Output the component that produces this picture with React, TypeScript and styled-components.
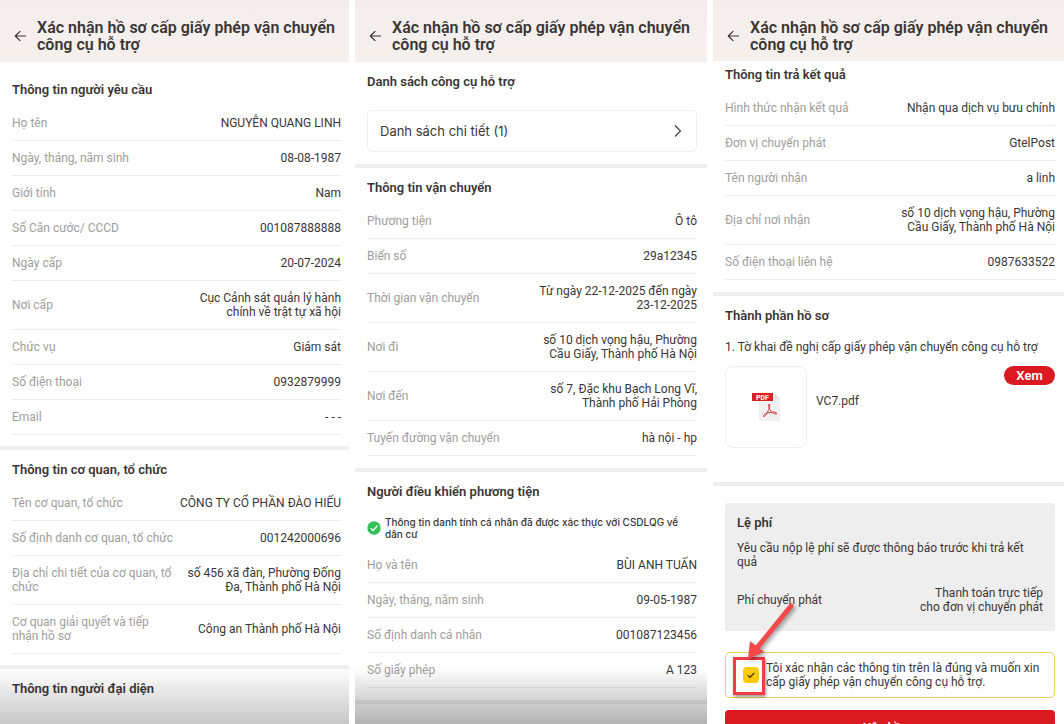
import React from "react";
import styled, { createGlobalStyle } from "styled-components";

const GlobalStyle = createGlobalStyle`
  * { box-sizing: border-box; }
  html, body { margin: 0; background: #fff; overflow: hidden; }
  body, button, input {
    font-family: Roboto, "Liberation Sans", sans-serif;
  }
`;

const ink = "#3b3635";
const muted = "#a09e9d";

const Board = styled.main`
  display: grid;
  grid-template-columns: 349fr 352fr 351fr;
  gap: 6px;
  height: 100vh;
  overflow: hidden;
`;

const Screen = styled.section`
  position: relative;
  min-width: 0;
  overflow: hidden;
  background: #fff;
  color: ${ink};
`;

const Header = styled.header<{ $height: number }>`
  display: flex;
  align-items: center;
  gap: 9px;
  height: ${(p) => p.$height}px;
  padding: 10px 8px 0 13px;
  background: linear-gradient(#f3eeec, #f6f0ed);
`;

const BackButton = styled.button`
  display: flex;
  padding: 0;
  border: 0;
  background: none;
  color: ${ink};
`;

const Title = styled.h1`
  margin: 0;
  font-size: 16px;
  font-weight: 600;
  line-height: 17px;
`;

const Section = styled.section<{ $top?: number; $right: number; $bottom?: number; $last?: boolean }>`
  padding: ${(p) => p.$top ?? 12}px ${(p) => p.$right}px ${(p) => p.$bottom ?? 12}px 12px;
  border-bottom: ${(p) => (p.$last ? 0 : 4)}px solid #eeeeee;
`;

const Heading = styled.h2`
  margin: 0 0 8px;
  font-size: 13px;
  font-weight: 600;
  line-height: 16px;
`;

const List = styled.dl`
  margin: 0;
`;

const Row = styled.div`
  display: flex;
  align-items: center;
  justify-content: space-between;
  gap: 8px;
  padding: 10px 0;
  border-bottom: 1px solid #ededed;
  font-size: 12px;
  line-height: 14px;
`;

const Term = styled.dt`
  max-width: 50%;
  color: ${muted};
`;

const Value = styled.dd`
  flex: none;
  margin: 0;
  text-align: right;
  white-space: pre-line;
`;

const DetailButton = styled.button`
  display: flex;
  align-items: center;
  justify-content: space-between;
  width: 100%;
  height: 42px;
  margin-top: 20px;
  padding: 0 12px;
  border: 1px solid #f0f0f0;
  border-radius: 5px;
  background: #fff;
  color: ${ink};
  font-family: Inter, "Liberation Sans", sans-serif;
  font-size: 13px;
`;

const Verified = styled.p`
  display: flex;
  align-items: center;
  gap: 4px;
  margin: 16px 0 8px;
  font-family: Inter, "Liberation Sans", sans-serif;
  font-size: 10px;
  font-weight: 500;
  line-height: 12px;
  white-space: pre-line;

  svg { flex: none; }
`;

const Fade = styled.div<{ $strength: number }>`
  position: absolute;
  inset: auto 0 0;
  height: 56px;
  background: linear-gradient(transparent, rgba(0, 0, 0, ${(p) => p.$strength}));
  pointer-events: none;
`;

const Text = styled.p`
  margin: 0;
  font-size: 12px;
  line-height: 14px;
  white-space: pre-line;
`;

const DocumentName = styled.h3`
  margin: 16px 0 0;
  font-size: 12px;
  font-weight: 400;
  line-height: 14px;
`;

const FileRow = styled.div`
  display: flex;
  align-items: flex-start;
  gap: 9px;
  margin-top: 12px;
`;

const FileThumb = styled.div`
  display: grid;
  place-items: center;
  width: 82px;
  height: 82px;
  border: 1px solid #efefef;
  border-radius: 8px;
`;

const FileName = styled(Text)`
  flex: 1;
  padding-top: 28px;
`;

const ViewButton = styled.button`
  width: 51px;
  height: 19px;
  padding: 0;
  border: 0;
  border-radius: 10px;
  background: #da1a20;
  color: #fff;
  font-size: 13px;
  font-weight: 600;
  line-height: 18px;
`;

const FeeCard = styled.div`
  padding: 12px 12px 17px;
  border-radius: 3px 3px 0 0;
  background: #eeeeee;
`;

const FeeNote = styled(Text)`
  margin-top: 10px;
`;

const FeeRow = styled.div`
  display: flex;
  align-items: center;
  justify-content: space-between;
  margin-top: 17px;
  text-align: right;
`;

const Confirm = styled.label`
  display: flex;
  align-items: center;
  gap: 7px;
  margin-top: 21px;
  padding: 8px 8px 8px 17px;
  border: 1px solid #e8cf5a;
  border-radius: 5px;
`;

const CheckWrap = styled.span`
  position: relative;
  display: flex;
`;

const Checkbox = styled.input`
  appearance: none;
  width: 16px;
  height: 16px;
  margin: 0;
  border-radius: 4px;
  background: #fbcb0a;
`;

const Tick = styled.svg`
  position: absolute;
  inset: 0;
  pointer-events: none;
`;

const Marker = styled.span`
  position: absolute;
  inset: -10px -6px -12px -10px;
  border: 3px solid #ee3f42;
  box-shadow: 1px 2px 3px rgba(0, 0, 0, 0.4);
  pointer-events: none;
`;

const Arrow = styled.svg`
  position: absolute;
  left: 0;
  bottom: 22px;
  overflow: visible;
  filter: drop-shadow(2px 2px 2px rgba(0, 0, 0, 0.4));
  pointer-events: none;
`;

const SubmitButton = styled.button`
  display: block;
  width: 100%;
  height: 36px;
  margin-top: 12px;
  padding: 0;
  border: 0;
  border-radius: 4px;
  background: #da1a20;
  color: #fff;
  font-size: 12px;
  font-weight: 600;
`;

type Entry = [label: string, value: string];

const requester: Entry[] = [
  ["Họ tên", "NGUYỄN QUANG LINH"],
  ["Ngày, tháng, năm sinh", "08-08-1987"],
  ["Giới tính", "Nam"],
  ["Số Căn cước/ CCCD", "001087888888"],
  ["Ngày cấp", "20-07-2024"],
  ["Nơi cấp", "Cục Cảnh sát quản lý hành\nchính về trật tự xã hội"],
  ["Chức vụ", "Giám sát"],
  ["Số điện thoại", "0932879999"],
  ["Email", "- - -"],
];

const organization: Entry[] = [
  ["Tên cơ quan, tổ chức", "CÔNG TY CỔ PHẦN ĐÀO HIẾU"],
  ["Số định danh cơ quan, tổ chức", "001242000696"],
  ["Địa chỉ chi tiết của cơ quan, tổ chức", "số 456 xã đàn, Phường Đống\nĐa, Thành phố Hà Nội"],
  ["Cơ quan giải quyết và tiếp nhận hồ sơ", "Công an Thành phố Hà Nội"],
];

const transport: Entry[] = [
  ["Phương tiện", "Ô tô"],
  ["Biển số", "29a12345"],
  ["Thời gian vận chuyển", "Từ ngày 22-12-2025 đến ngày\n23-12-2025"],
  ["Nơi đi", "số 10 dịch vọng hậu, Phường\nCầu Giấy, Thành phố Hà Nội"],
  ["Nơi đến", "số 7, Đặc khu Bạch Long Vĩ,\nThành phố Hải Phòng"],
  ["Tuyến đường vận chuyển", "hà nội - hp"],
];

const driver: Entry[] = [
  ["Họ và tên", "BÙI ANH TUẤN"],
  ["Ngày, tháng, năm sinh", "09-05-1987"],
  ["Số định danh cá nhân", "001087123456"],
  ["Số giấy phép", "A 123"],
];

const delivery: Entry[] = [
  ["Hình thức nhận kết quả", "Nhận qua dịch vụ bưu chính"],
  ["Đơn vị chuyển phát", "GtelPost"],
  ["Tên người nhận", "a linh"],
  ["Địa chỉ nơi nhận", "số 10 dịch vọng hậu, Phường\nCầu Giấy, Thành phố Hà Nội"],
  ["Số điện thoại liên hệ", "0987633522"],
];

function PageHeader({ height }: { height: number }) {
  return (
    <Header $height={height}>
      <BackButton type="button" aria-label="Quay lại">
        <svg width="15" height="14" viewBox="0 0 15 14" fill="none" stroke="currentColor" strokeWidth="1.2" strokeLinecap="round" strokeLinejoin="round">
          <path d="M12.5 7H2.5M7 2.3 2.3 7 7 11.7" />
        </svg>
      </BackButton>
      <Title>Xác nhận hồ sơ cấp giấy phép vận chuyển<br />công cụ hỗ trợ</Title>
    </Header>
  );
}

function Entries({ items }: { items: Entry[] }) {
  return (
    <List>
      {items.map(([label, value]) => (
        <Row key={label}>
          <Term>{label}</Term>
          <Value>{value}</Value>
        </Row>
      ))}
    </List>
  );
}

export default function App() {
  return (
    <>
      <GlobalStyle />
      <Board>
        <Screen>
          <PageHeader height={62} />
          <Section $top={20} $right={8} $bottom={11}>
            <Heading>Thông tin người yêu cầu</Heading>
            <Entries items={requester} />
          </Section>
          <Section $right={8} $bottom={11}>
            <Heading>Thông tin cơ quan, tổ chức</Heading>
            <Entries items={organization} />
          </Section>
          <Section $right={8} $last>
            <Heading>Thông tin người đại diện</Heading>
          </Section>
          <Fade $strength={0.22} />
        </Screen>

        <Screen>
          <PageHeader height={62} />
          <Section $right={10}>
            <Heading>Danh sách công cụ hỗ trợ</Heading>
            <DetailButton type="button">
              Danh sách chi tiết (1)
              <svg width="12" height="14" viewBox="0 0 12 14" fill="none" stroke="currentColor" strokeWidth="1.1">
                <path d="M3 1.5 8.500 7 3 12.500" />
              </svg>
            </DetailButton>
          </Section>
          <Section $right={10}>
            <Heading>Thông tin vận chuyển</Heading>
            <Entries items={transport} />
          </Section>
          <Section $right={10}>
            <Heading>Người điều khiển phương tiện</Heading>
            <Verified>
              <svg width="14" height="14" viewBox="0 0 14 14">
                <circle cx="7" cy="7" r="6.7" fill="#34c15a" />
                <path d="m3.8 7.3 2.3 2.2 4.2-4.7" fill="none" stroke="#fff" strokeWidth="1.3" />
              </svg>
              <span>{"Thông tin danh tính cá nhân đã được xác thực với CSDLQG về\ndân cư"}</span>
            </Verified>
            <Entries items={driver} />
          </Section>
          <Fade $strength={0.3} />
        </Screen>

        <Screen>
          <PageHeader height={61} />
          <Section $top={6} $right={9}>
            <Heading>Thông tin trả kết quả</Heading>
            <Entries items={delivery} />
          </Section>
          <Section $right={9} $bottom={34}>
            <Heading>Thành phần hồ sơ</Heading>
            <DocumentName>1. Tờ khai đề nghị cấp giấy phép vận chuyển công cụ hỗ trợ</DocumentName>
            <FileRow>
              <FileThumb>
                <svg width="30" height="30" viewBox="0 0 30 30">
                  <path d="M8 1h15l6 6v22H8z" fill="#f1f0f0" />
                  <path d="M23 1v6h6z" fill="#e2e2e2" />
                  <rect x="1" y="1" width="21" height="8" fill="#da2128" />
                  <text x="11.5" y="7.5" textAnchor="middle" fontFamily="Roboto" fontSize="7" fontWeight="700" fill="#fff">PDF</text>
                  <path d="M18 12c1.5 0 .5 4-1.5 8-1.5 3-3 5-4 4.5s1-2.5 4-3.5 7-1.3 8.5-.5.5 1.800-1 1.5c-2.5-.5-5.5-4-6-6.5-.4-2-.5-3.5 0-3.5z" fill="none" stroke="#d4373c" strokeWidth="1" />
                </svg>
              </FileThumb>
              <FileName>VC7.pdf</FileName>
              <ViewButton type="button">Xem</ViewButton>
            </FileRow>
          </Section>
          <Section $top={17} $right={9} $last>
            <FeeCard>
              <Heading>Lệ phí</Heading>
              <FeeNote>{"Yêu cầu nộp lệ phí sẽ được thông báo trước khi trả kết\nquả"}</FeeNote>
              <FeeRow>
                <Text>Phí chuyển phát</Text>
                <Text>{"Thanh toán trực tiếp\ncho đơn vị chuyển phát"}</Text>
              </FeeRow>
            </FeeCard>
            <Confirm>
              <CheckWrap>
                <Checkbox type="checkbox" defaultChecked />
                <Tick viewBox="0 0 16 16" fill="none" stroke="#4a3d12" strokeWidth="1.4">
                  <path d="m4.8 8.3 2.2 2 4.2-4.3" />
                </Tick>
                <Marker />
                <Arrow width="52" height="58" viewBox="0 0 52 58">
                  <path d="M48 3 14 45" stroke="#f5484b" strokeWidth="5" strokeLinecap="round" />
                  <path d="M5 56 7 38l14 11z" fill="#f5484b" />
                </Arrow>
              </CheckWrap>
              <Text as="span">{"Tôi xác nhận các thông tin trên là đúng và muốn xin\ncấp giấy phép vận chuyển công cụ hỗ trợ."}</Text>
            </Confirm>
            <SubmitButton type="submit">Nộp hồ sơ</SubmitButton>
          </Section>
        </Screen>
      </Board>
    </>
  );
}
